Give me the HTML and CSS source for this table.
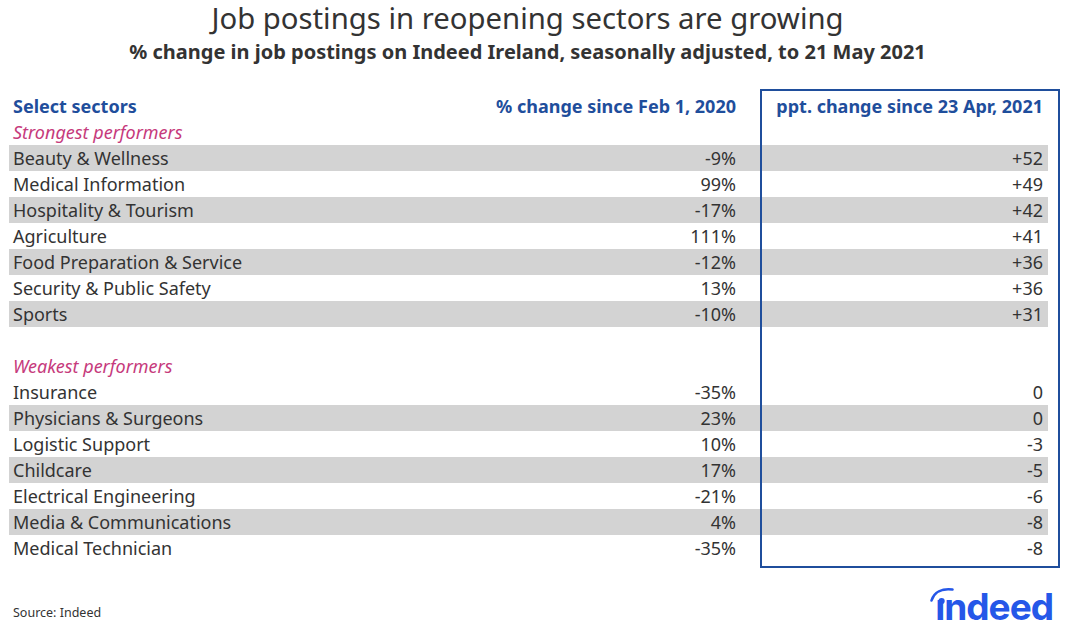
FILE: index.html
```html
<!DOCTYPE html>
<html lang="en">
<head>
<meta charset="utf-8">
<title>Job postings in reopening sectors are growing</title>
<link rel="stylesheet" href="styles.css">
</head>
<body>
<div class="page">
  <header class="head">
    <h1 class="title">Job postings in reopening sectors are growing</h1>
    <h2 class="subtitle">% change in job postings on Indeed Ireland, seasonally adjusted, to 21 May 2021</h2>
  </header>

  <section class="table">
    <div class="box"></div>
    <div class="row hdr">
      <span>Select sectors</span>
      <span class="num">% change since Feb 1, 2020</span>
      <span class="num">ppt. change since 23 Apr, 2021</span>
    </div>
    <div class="row group"><span>Strongest performers</span></div>
    <div class="row alt"><span>Beauty &amp; Wellness</span><span class="num">-9%</span><span class="num">+52</span></div>
    <div class="row"><span>Medical Information</span><span class="num">99%</span><span class="num">+49</span></div>
    <div class="row alt"><span>Hospitality &amp; Tourism</span><span class="num">-17%</span><span class="num">+42</span></div>
    <div class="row"><span>Agriculture</span><span class="num">111%</span><span class="num">+41</span></div>
    <div class="row alt"><span>Food Preparation &amp; Service</span><span class="num">-12%</span><span class="num">+36</span></div>
    <div class="row"><span>Security &amp; Public Safety</span><span class="num">13%</span><span class="num">+36</span></div>
    <div class="row alt"><span>Sports</span><span class="num">-10%</span><span class="num">+31</span></div>
    <div class="row"></div>
    <div class="row group"><span>Weakest performers</span></div>
    <div class="row"><span>Insurance</span><span class="num">-35%</span><span class="num">0</span></div>
    <div class="row alt"><span>Physicians &amp; Surgeons</span><span class="num">23%</span><span class="num">0</span></div>
    <div class="row"><span>Logistic Support</span><span class="num">10%</span><span class="num">-3</span></div>
    <div class="row alt"><span>Childcare</span><span class="num">17%</span><span class="num">-5</span></div>
    <div class="row"><span>Electrical Engineering</span><span class="num">-21%</span><span class="num">-6</span></div>
    <div class="row alt"><span>Media &amp; Communications</span><span class="num">4%</span><span class="num">-8</span></div>
    <div class="row"><span>Medical Technician</span><span class="num">-35%</span><span class="num">-8</span></div>
  </section>

  <footer class="foot">
    <span class="source">Source: Indeed</span>
    <span class="logo">
      <svg class="logo-mark" width="30" height="20" viewBox="0 0 30 20" aria-hidden="true">
        <path d="M2.5 15.5 C 5 7, 13 3.2, 23.5 4.5" fill="none" stroke="#2557e8" stroke-width="2.6" stroke-linecap="round"/>
        <circle cx="12.6" cy="16" r="3.1" fill="#2557e8"/>
      </svg>
      <span class="logo-text">ındeed</span>
    </span>
  </footer>
</div>
</body>
</html>
```

FILE: styles.css
```css
* { box-sizing: border-box; }
html, body { margin: 0; padding: 0; background: #fff; }
body {
  font-family: "Noto Sans", "Open Sans", "DejaVu Sans", sans-serif;
  color: #333;
}
.page {
  width: 1071px;
  height: 632px;
  position: relative;
  display: flex;
  flex-direction: column;
}
.head {
  display: flex;
  flex-direction: column;
  align-items: center;
  padding-right: 16px;
}
.title {
  margin: 0;
  font-weight: 400;
  font-size: 29.3px;
  line-height: 36px;
  color: #333;
}
.subtitle {
  margin: 0;
  font-weight: 700;
  font-size: 20px;
  line-height: 32px;
  color: #333;
}
.table {
  position: relative;
  margin: 25px 0 0 9px;
  width: 1039px;
}
.box {
  position: absolute;
  left: 751px;
  top: -4px;
  width: 300px;
  height: 479px;
  border: 2px solid #1f4e9c;
  pointer-events: none;
}
.row {
  display: grid;
  grid-template-columns: 483px 240px 307px;
  padding: 0 5px 0 4px;
  height: 26px;
  align-items: center;
  font-size: 18px;
  line-height: 26px;
  color: #333;
  white-space: nowrap;
}
.row.alt { background: #d3d3d3; }
.num { text-align: right; }
.hdr {
  color: #1f4e9c;
  font-weight: 700;
}
.group {
  color: #c63a7c;
  font-style: italic;
}
.foot {
  margin-top: auto;
  height: 50px;
  display: flex;
  justify-content: space-between;
  align-items: flex-end;
  padding: 0 18px 7px 13px;
  position: relative;
}
.source {
  font-size: 12.5px;
  line-height: 16px;
  margin-bottom: 4px;
  color: #333;
}
.logo {
  position: relative;
  display: inline-block;
}
.logo-text {
  font-family: "Inter", "Roboto", sans-serif;
  font-weight: 700;
  font-size: 37px;
  line-height: 36px;
  letter-spacing: -1px;
  color: #2557e8;
}
.logo-mark {
  position: absolute;
  left: -6px;
  top: -4px;
}
```
